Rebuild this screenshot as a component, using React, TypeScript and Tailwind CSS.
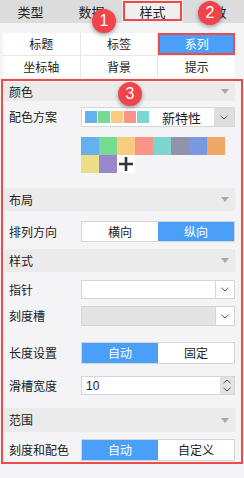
import React from "react";

const palette = [
  "#63b2ee",
  "#76da91",
  "#f8cb7f",
  "#f89588",
  "#7cd6cf",
  "#9192ab",
  "#7898e1",
  "#efa666",
  "#eddd86",
  "#9987ce",
];

function Chevron({ up = false }: { up?: boolean }) {
  return (
    <svg width="8" height="5" viewBox="0 0 8 5" className={up ? "rotate-180" : ""}>
      <path d="M0.5 0.8 L4 4 L7.5 0.8" fill="none" stroke="#555" strokeWidth="1" />
    </svg>
  );
}

function Badge({ n, className }: { n: number; className: string }) {
  return (
    <div
      className={`absolute w-[24px] h-[24px] rounded-full bg-[#f0444a] text-white flex items-center justify-center text-[16px] leading-none shadow-[0_2px_4px_rgba(0,0,0,0.35)] font-['Liberation_Sans',sans-serif] ${className}`}
    >
      {n}
    </div>
  );
}

function Header({ title, h, mt }: { title: string; h: string; mt: string }) {
  return (
    <div className={`${h} ${mt} bg-[#ebebeb] flex items-center justify-between pl-[5px] pr-[6px]`}>
      <span>{title}</span>
      <svg width="8" height="5" viewBox="0 0 8 5">
        <path d="M0 0 L8 0 L4 5 Z" fill="#a8a8a8" />
      </svg>
    </div>
  );
}

function Row({ label, h, mt, children }: { label: string; h: string; mt: string; children: React.ReactNode }) {
  return (
    <div className={`flex items-center ${mt}`}>
      <div className="w-[77px] pl-[5px] whitespace-nowrap">{label}</div>
      <div className={`flex-1 ${h}`}>{children}</div>
    </div>
  );
}

function Toggle({ left, right, active }: { left: string; right: string; active: "left" | "right" }) {
  return (
    <div className="h-full flex border border-[#d6d6d6] bg-white">
      <div className={`flex-1 flex items-center justify-center ${active === "left" ? "bg-[#4a9ff8] text-white" : ""}`}>
        {left}
      </div>
      <div className={`flex-1 flex items-center justify-center ${active === "right" ? "bg-[#4a9ff8] text-white" : ""}`}>
        {right}
      </div>
    </div>
  );
}

function Select({ disabled = false }: { disabled?: boolean }) {
  return (
    <div className="h-full flex border border-[#d6d6d6] bg-white">
      <div className={`flex-1 ${disabled ? "bg-[#e4e4e4]" : ""}`} />
      <div className="w-[19px] flex items-center justify-center border-l border-[#d6d6d6]">
        <Chevron />
      </div>
    </div>
  );
}

export default function App() {
  return (
    <div className="relative w-[244px] h-[478px] overflow-hidden bg-[#f4f4f6] text-[12px] text-[#222] font-['Noto_Sans_CJK_SC',sans-serif] leading-none">
      {/* top tabs */}
      <div className="flex h-[23px] bg-[#dcdcdc] text-[13px]">
        <div className="w-[61px] flex items-center justify-center">类型</div>
        <div className="w-[61px] flex items-center justify-center">数据</div>
        <div className="w-[61px] bg-[#efefef] pt-[1px] px-[1px]">
          <div className="h-[20px] border-2 border-[#ee4a4a] flex items-center justify-center">样式</div>
        </div>
        <div className="flex-1 flex items-center justify-center">特效</div>
      </div>

      {/* sub tabs */}
      <div className="mt-[10px] ml-[3px] w-[232px] grid grid-cols-3 gap-px bg-[#e8e8e8]">
        <div className="h-[22px] bg-white flex items-center justify-center">标题</div>
        <div className="h-[22px] bg-white flex items-center justify-center">标签</div>
        <div className="h-[22px] bg-[#4a9ff8] text-white border-2 border-[#ee4a4a] flex items-center justify-center">
          系列
        </div>
        <div className="h-[22px] bg-white flex items-center justify-center">坐标轴</div>
        <div className="h-[22px] bg-white flex items-center justify-center">背景</div>
        <div className="h-[22px] bg-white flex items-center justify-center">提示</div>
      </div>

      {/* settings */}
      <div className="mt-[1px] mx-[1px] h-[385px] border-2 border-[#ee4a4a] pl-px pr-[6px]">
        <Header title="颜色" h="h-[19px]" mt="mt-px" />
        <Row label="配色方案" h="h-[20px]" mt="mt-[6px]">
          <div className="h-full flex items-center border border-[#d6d6d6] bg-white">
            <div className="flex gap-px pl-[3px]">
              {palette.slice(0, 5).map((c) => (
                <div key={c} className="w-[12px] h-[12px]" style={{ backgroundColor: c }} />
              ))}
            </div>
            <div className="flex-1 text-center text-[13px]">新特性</div>
            <div className="w-[20px] h-full flex items-center justify-center bg-[#dedede]">
              <Chevron />
            </div>
          </div>
        </Row>
        <div className="mt-[10px] ml-[77px] w-[144px] flex flex-wrap">
          {palette.map((c) => (
            <div key={c} className="w-[18px] h-[18px]" style={{ backgroundColor: c }} />
          ))}
          <div className="w-[18px] h-[18px] bg-white flex items-center justify-center">
            <svg width="14" height="14" viewBox="0 0 14 14">
              <path d="M7 0 V14 M0 7 H14" stroke="#333" strokeWidth="2.6" />
            </svg>
          </div>
        </div>

        <Header title="布局" h="h-[23px]" mt="mt-[15px]" />
        <Row label="排列方向" h="h-[21px]" mt="mt-[10px]">
          <Toggle left="横向" right="纵向" active="right" />
        </Row>

        <Header title="样式" h="h-[23px]" mt="mt-[7px]" />
        <Row label="指针" h="h-[19px]" mt="mt-[8px]">
          <Select />
        </Row>
        <Row label="刻度槽" h="h-[20px]" mt="mt-[7px]">
          <Select disabled />
        </Row>
        <Row label="长度设置" h="h-[22px]" mt="mt-[16px]">
          <Toggle left="自动" right="固定" active="left" />
        </Row>
        <Row label="滑槽宽度" h="h-[19px]" mt="mt-[12px]">
          <div className="h-full flex border border-[#d6d6d6] bg-white">
            <div className="flex-1 flex items-center pl-[4px] text-[#1a1a4a] font-['Liberation_Sans',sans-serif]">10</div>
            <div className="w-[14px] flex flex-col items-center justify-center gap-[3px] bg-[#e2e2e2]">
              <Chevron up />
              <Chevron />
            </div>
          </div>
        </Row>

        <Header title="范围" h="h-[24px]" mt="mt-[13px]" />
        <Row label="刻度和配色" h="h-[22px]" mt="mt-[7px]">
          <Toggle left="自动" right="自定义" active="left" />
        </Row>
      </div>

      <Badge n={1} className="left-[92px] top-[9px]" />
      <Badge n={2} className="left-[198px] top-[1px]" />
      <Badge n={3} className="left-[118px] top-[82px]" />
    </div>
  );
}
